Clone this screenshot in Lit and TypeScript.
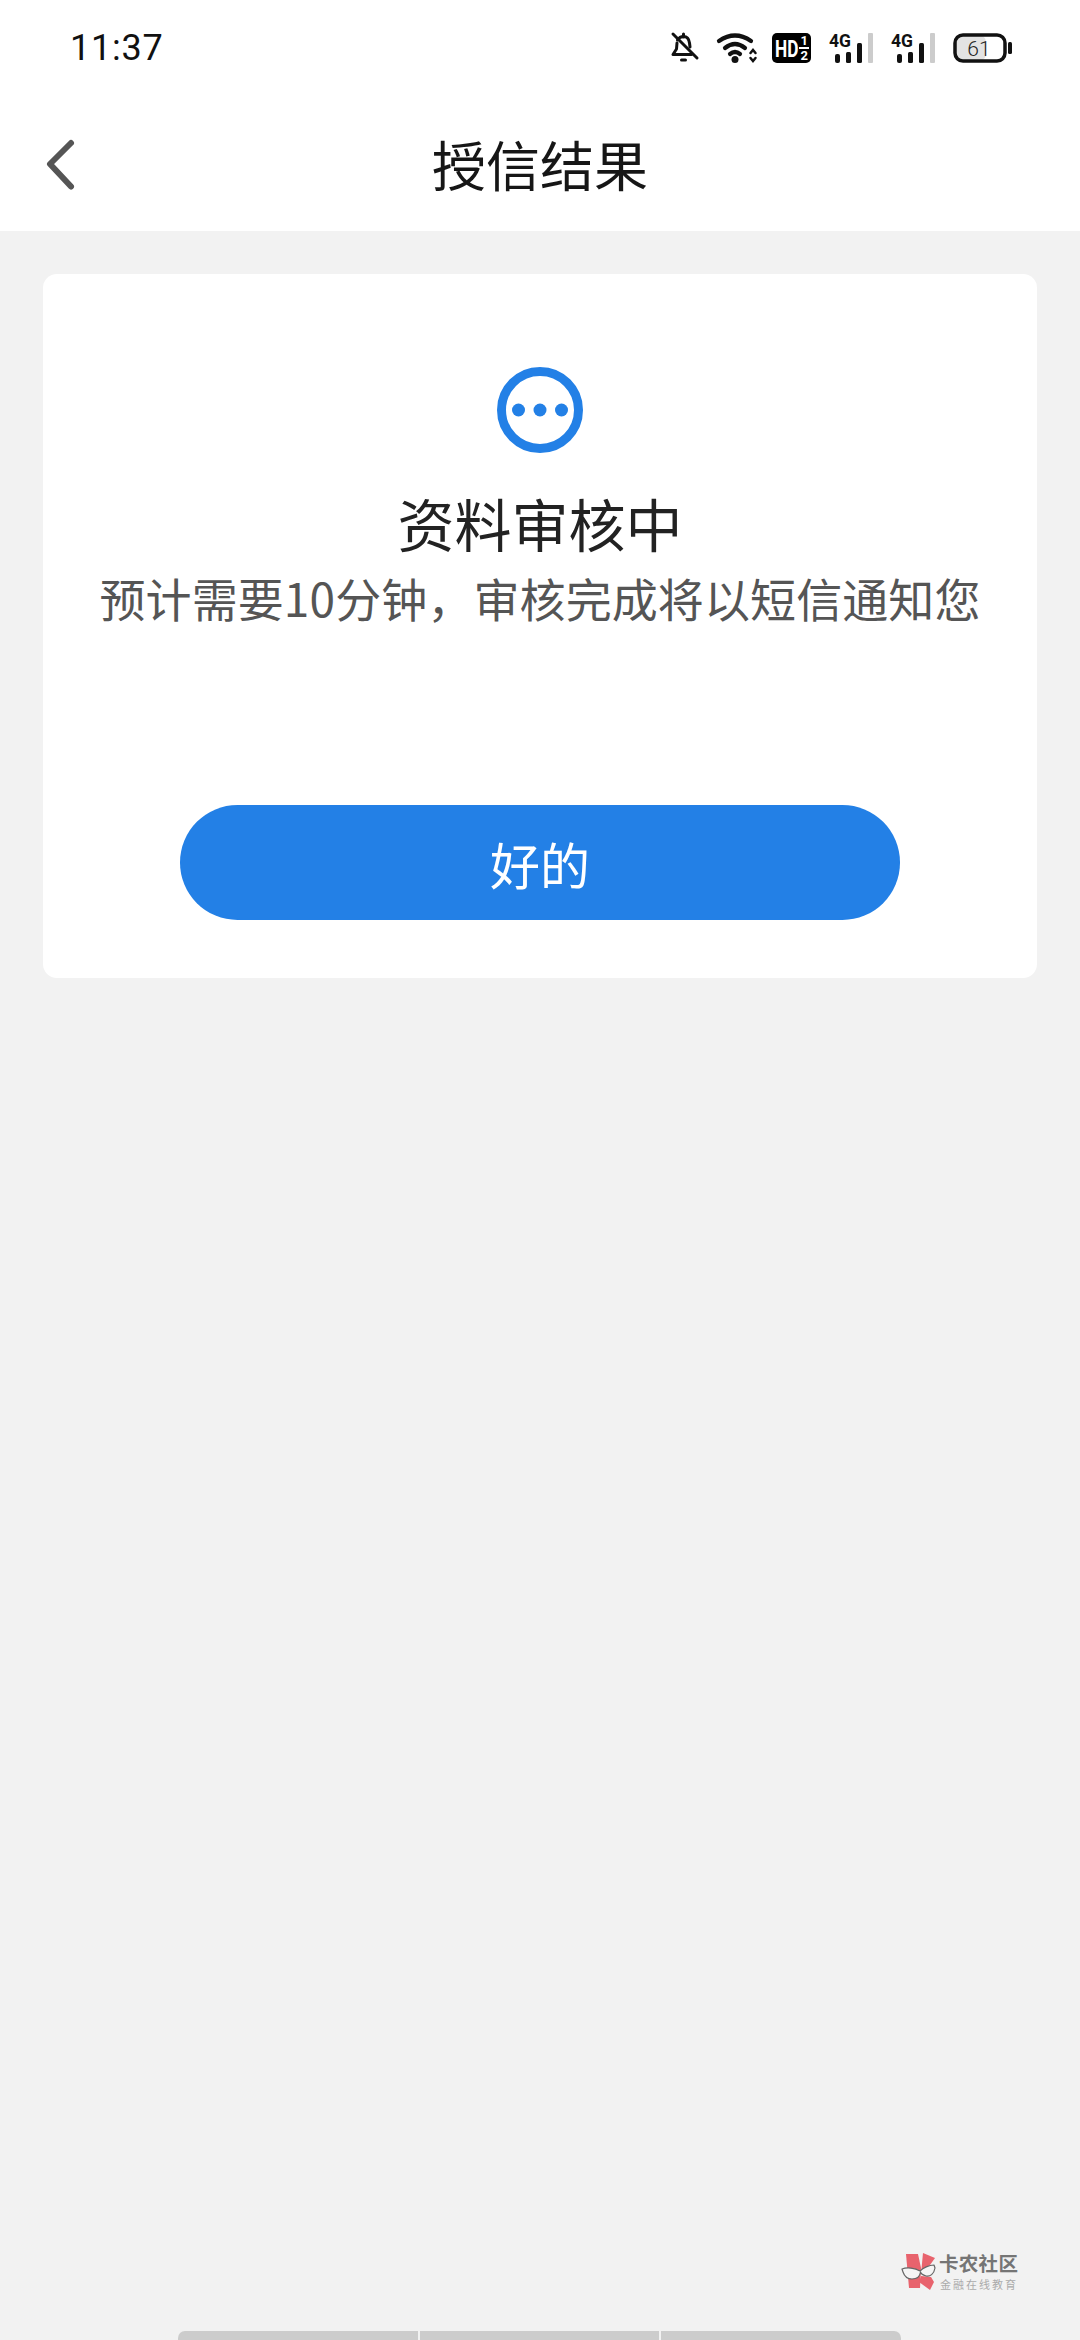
import { html, css, LitElement } from 'lit'
import { customElement } from 'lit/decorators.js'

@customElement('app-root')
export class AppRoot extends LitElement {
  static styles = css`
    :host {
      display: block;
      position: relative;
      width: 1080px;
      height: 2340px;
      overflow: hidden;
      background: #f2f2f2;
      font-family: 'Noto Sans CJK SC', 'Noto Sans', sans-serif;
      color: #1c1c1c;
    }

    .page {
      display: flex;
      flex-direction: column;
      height: 100%;
    }

    .top {
      background: #fff;
    }

    .status {
      height: 96px;
      padding: 0 68px 0 70px;
      display: flex;
      align-items: center;
      justify-content: space-between;
    }

    .time {
      font-family: Roboto, sans-serif;
      font-weight: 400;
      font-size: 36px;
      letter-spacing: 0.8px;
      color: #111;
    }

    .icons {
      display: flex;
      align-items: center;
      gap: 18px;
    }

    .icons svg {
      display: block;
      height: 30px;
      overflow: visible;
    }

    .icons .wifi {
      margin-left: 3px;
      margin-right: -3px;
    }

    .nav {
      height: 135px;
      display: grid;
      grid-template-columns: 1fr auto 1fr;
      align-items: center;
      padding: 0 44px;
    }

    .back {
      display: block;
    }

    .nav h1 {
      margin: 0;
      font-size: 54px;
      font-weight: 400;
      line-height: 70px;
      color: #161616;
    }

    .card {
      margin: 43px 43px 0;
      height: 704px;
      box-sizing: border-box;
      padding-top: 93px;
      background: #fff;
      border-radius: 14px;
      display: flex;
      flex-direction: column;
      align-items: center;
    }

    .state {
      display: block;
    }

    .card h2 {
      margin: 33px 0 0;
      font-size: 57px;
      font-weight: 400;
      line-height: 72px;
      color: #222;
    }

    .card p {
      margin: 6px 0 0;
      font-size: 46px;
      line-height: 66px;
      letter-spacing: 0.1px;
      color: #555;
      white-space: nowrap;
    }

    .ok {
      margin-top: 175px;
      width: 720px;
      height: 115px;
      border: none;
      border-radius: 58px;
      background: #2380e6;
      color: #fff;
      font-family: inherit;
      font-size: 50px;
    }

    .gesture {
      margin: auto 0 0 178px;
      width: 723px;
      height: 9px;
      display: flex;
      gap: 2px;
    }

    .gesture span {
      flex: 1;
      background: #ccc;
    }

    .gesture span:first-child {
      border-top-left-radius: 7px;
    }

    .gesture span:last-child {
      border-top-right-radius: 7px;
    }

    .watermark {
      position: absolute;
      left: 901px;
      top: 2250px;
      display: flex;
      gap: 1px;
      align-items: flex-start;
    }

    .brand {
      display: flex;
      flex-direction: column;
      padding-top: 1px;
    }

    .brand b {
      font-size: 19.5px;
      line-height: 24px;
      font-weight: 700;
      letter-spacing: 0.3px;
      padding-left: 1px;
      color: #757575;
    }

    .brand small {
      margin-top: 2px;
      font-size: 11px;
      line-height: 14px;
      letter-spacing: 2px;
      padding-left: 2px;
      color: #ababab;
    }
  `

  private signal() {
    return html`<svg width="44" viewBox="0 0 44 30">
      <text x="0" y="14" font-family="Roboto, sans-serif" font-weight="700" font-size="19" textLength="22" lengthAdjust="spacingAndGlyphs" fill="#111">4G</text>
      <rect x="6" y="21" width="5" height="9" rx="2" fill="#111" />
      <rect x="17" y="19" width="5" height="11" rx="1.5" fill="#111" />
      <rect x="28" y="10" width="5" height="20" rx="1.5" fill="#111" />
      <rect x="39" y="0" width="5" height="30" rx="1" fill="#ccc" />
    </svg>`
  }

  render() {
    return html`
      <div class="page">
        <div class="top">
          <div class="status">
            <span class="time">11:37</span>
            <div class="icons">
              <svg width="24" viewBox="0 0 24 30" fill="none" stroke="#111" stroke-width="3" stroke-linejoin="round" stroke-linecap="round">
                <path d="M11.500 1v3" />
                <path d="M5.500 7C7 4.500 9 3.500 11.500 3.500 15 3.500 17 6 17.500 10l.5 4" />
                <path d="M5 10 4.500 16 1 21.500h18.500" />
                <path d="M1 1l24 24" />
                <path d="M9.500 27h4" stroke-width="3" />
              </svg>
              <svg class="wifi" width="40" viewBox="0 0 40 30" fill="none" stroke="#111" stroke-width="4.200" stroke-linecap="round">
                <path d="M2 8Q18 -3 34 8" />
                <path d="M8 15Q18 7 28 15" />
                <path d="M13 21Q18 17 23 21" />
                <circle cx="18" cy="26.500" r="3.500" fill="#111" stroke="none" />
                <path d="M33.500 20l2.500-3 2.500 3M33.500 25l2.500 3 2.500-3" stroke-width="2.500" />
              </svg>
              <svg width="39" viewBox="0 0 39 30">
                <rect width="39" height="30" rx="5" fill="#000" />
                <text transform="translate(3 24) scale(0.72 1)" font-family="Roboto, sans-serif" font-weight="700" font-size="24" fill="#fff">HD</text>
                <text x="28.500" y="12" font-family="Roboto, sans-serif" font-weight="700" font-size="13" fill="#fff">1</text>
                <text x="28.500" y="27" font-family="Roboto, sans-serif" font-weight="700" font-size="13" fill="#fff">2</text>
                <rect x="27" y="14" width="10" height="2" fill="#fff" />
              </svg>
              ${this.signal()} ${this.signal()}
              <svg width="59" viewBox="0 0 59 30">
                <rect x="2" y="2" width="31" height="26" rx="7" fill="#e3e3e3" />
                <rect x="2" y="2" width="50" height="26" rx="8" fill="none" stroke="#111" stroke-width="3.500" />
                <rect x="55" y="9" width="4" height="12" rx="1.500" fill="#111" />
                <text x="26" y="23" text-anchor="middle" font-family="Roboto, sans-serif" font-weight="300" font-size="21" fill="#222">61</text>
              </svg>
            </div>
          </div>
          <div class="nav">
            <svg class="back" width="34" height="56" viewBox="0 0 34 56" fill="none" stroke="#555" stroke-width="6" stroke-linecap="round" stroke-linejoin="round">
              <path d="M27 7 6 28 27 50.500" />
            </svg>
            <h1>授信结果</h1>
          </div>
        </div>

        <div class="card">
          <svg class="state" width="86" height="86" viewBox="0 0 86 86">
            <circle cx="43" cy="43" r="38.500" fill="none" stroke="#2380e6" stroke-width="9" />
            <circle cx="21.500" cy="43" r="6.500" fill="#2380e6" />
            <circle cx="43" cy="43" r="6.500" fill="#2380e6" />
            <circle cx="64.500" cy="43" r="6.500" fill="#2380e6" />
          </svg>
          <h2>资料审核中</h2>
          <p>预计需要10分钟，审核完成将以短信通知您</p>
          <button class="ok">好的</button>
        </div>

        <div class="gesture"><span></span><span></span><span></span></div>
      </div>

      <div class="watermark">
        <svg width="36" height="42" viewBox="0 0 36 42">
          <path d="M5 4H17L20 18 19 38H8Z" fill="#e8636d" />
          <path d="M22 3 34 8 24 22 20 24Z" fill="#e8636d" />
          <path d="M20 26 30 27 33 32 29 40 18 32Z" fill="#e8636d" />
          <path d="M1 19C6 17 14 18 19 21 22 18 28 15 33 15L34 18C33 24 29 27 25 26 22 25 20 24 19.500 22 19 26 16 29 11 29 6 29 3 25 2 22Z" fill="#f5f5f5" stroke="#666" stroke-width="1.200" stroke-linejoin="round" />
        </svg>
        <div class="brand">
          <b>卡农社区</b>
          <small>金融在线教育</small>
        </div>
      </div>
    `
  }
}
